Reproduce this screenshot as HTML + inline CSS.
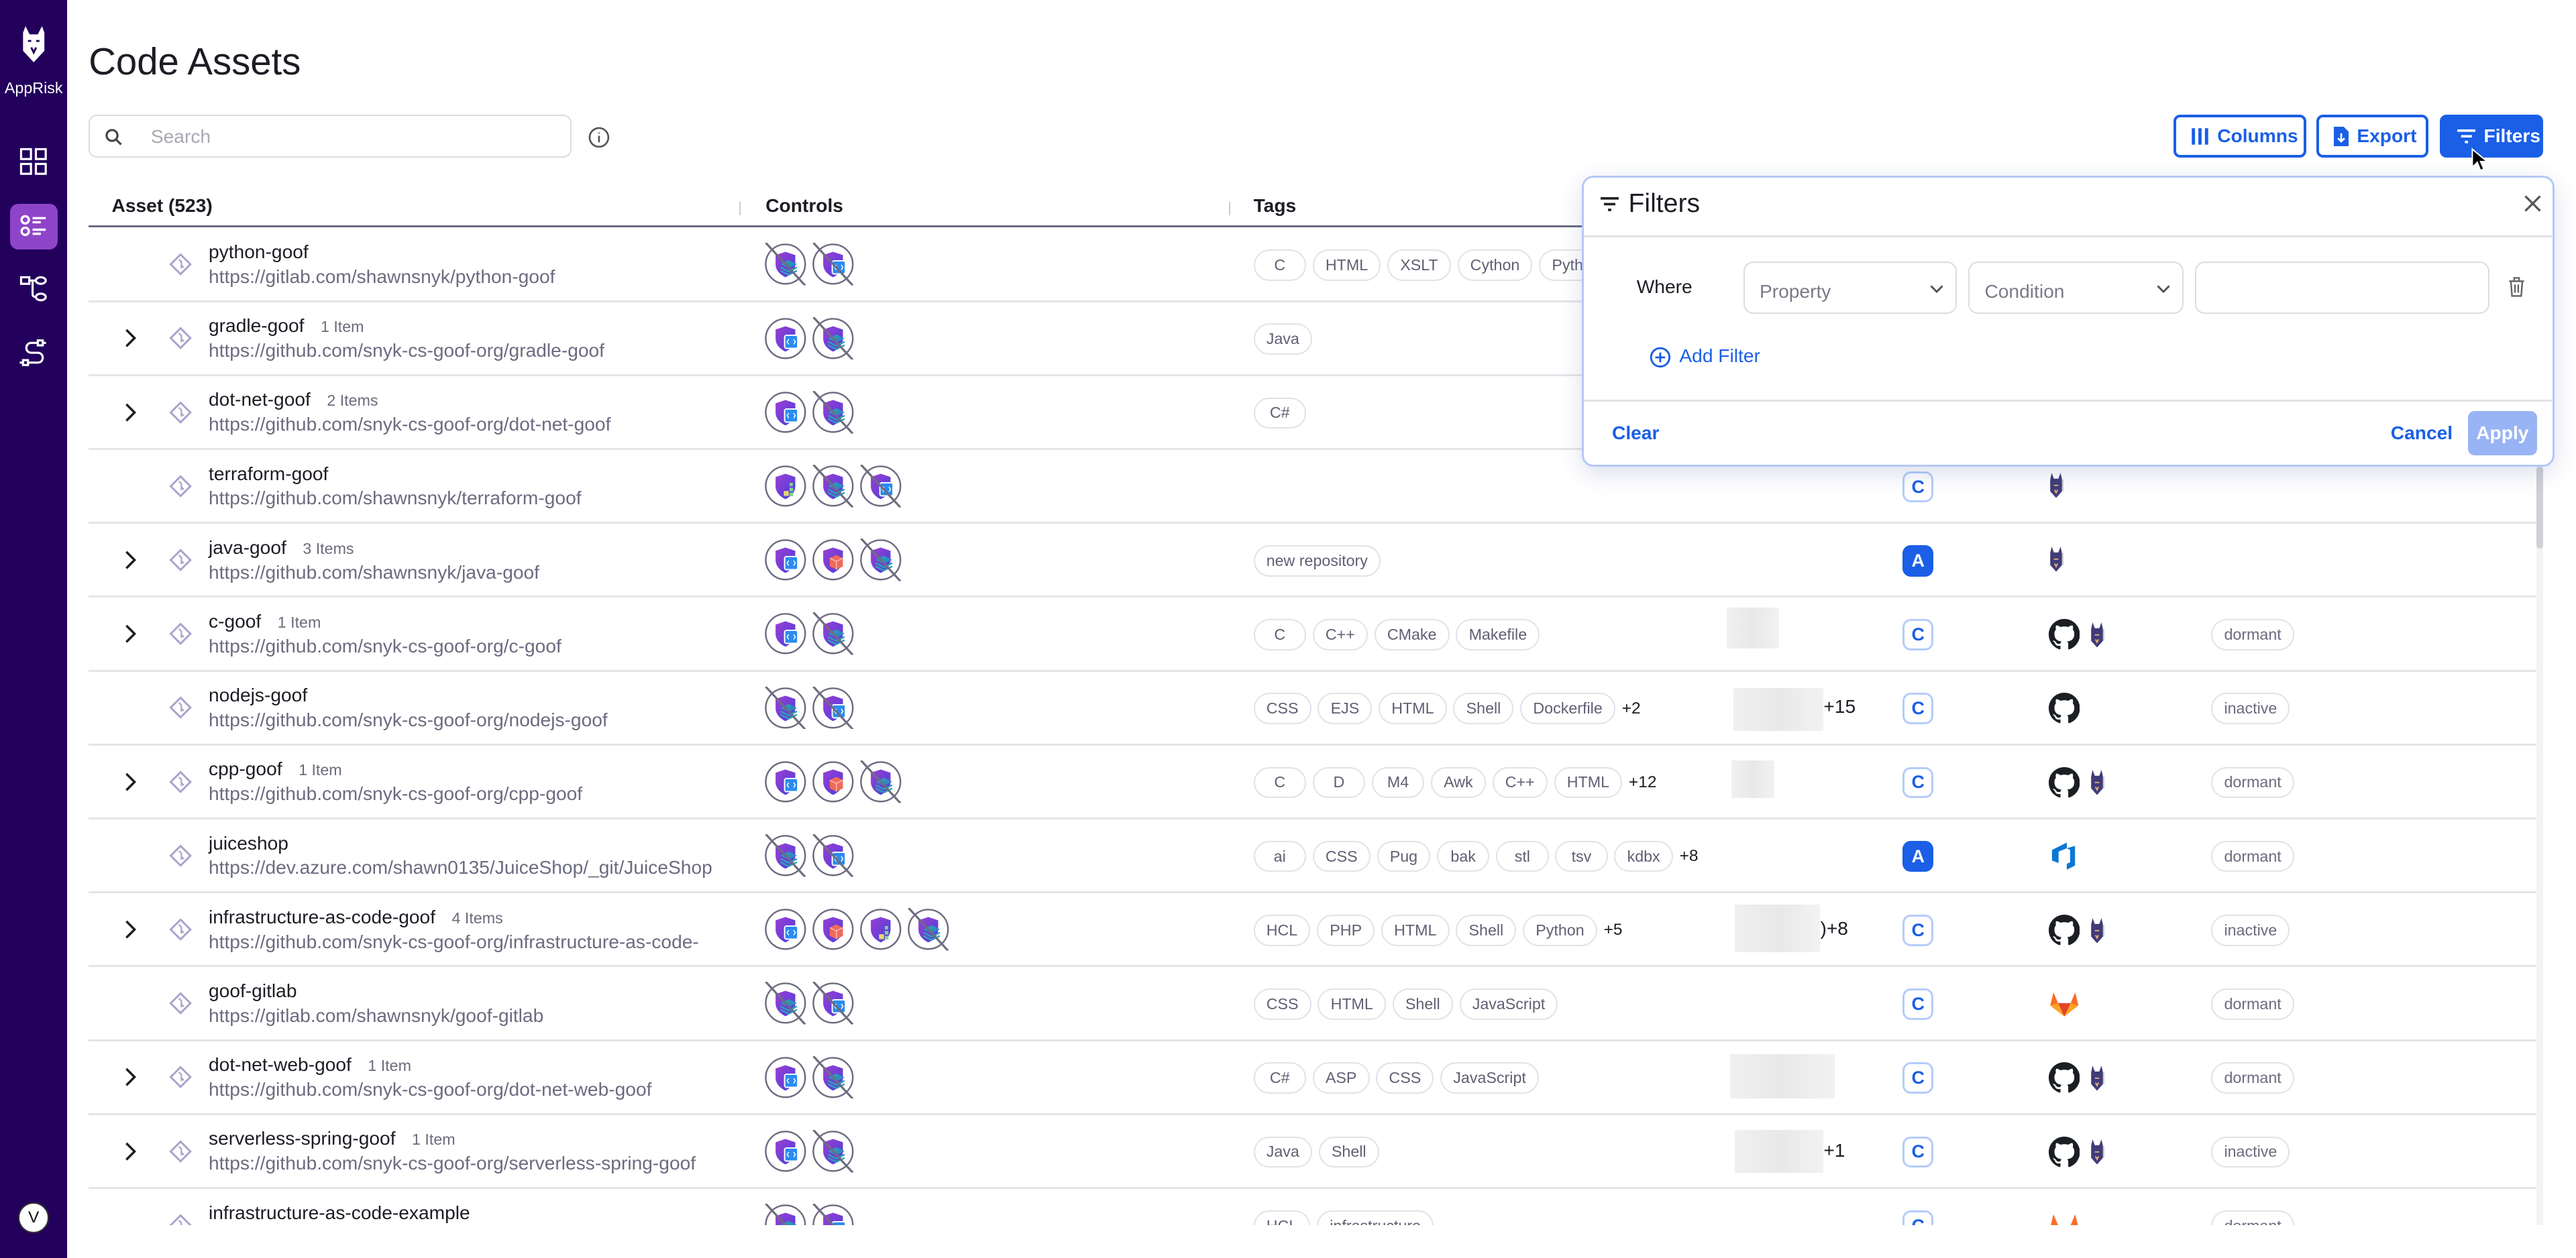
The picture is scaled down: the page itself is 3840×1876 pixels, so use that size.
<!DOCTYPE html>
<html><head><meta charset="utf-8">
<style>
*{box-sizing:border-box;margin:0;padding:0}
html,body{width:3840px;height:1876px;overflow:hidden;background:#fff}
#root{zoom:2.44898;width:1568px;height:766px;position:relative;font-family:"Liberation Sans",Arial,sans-serif;color:#1c1c24;overflow:hidden}
.side{position:absolute;left:0;top:0;width:41px;height:766px;background:#22005c}
.abs{position:absolute}
h1{position:absolute;left:54px;top:24px;font-size:23px;font-weight:400;color:#1c1c24}
.search{position:absolute;left:54px;top:70px;width:294px;height:26px;border:1px solid #dcdce2;border-radius:5px}
.search span{position:absolute;left:37px;top:6px;font-size:11.5px;color:#a8a8b4}
.btn{position:absolute;top:70px;height:26px;border:2px solid #1a5fe6;border-radius:4px;color:#1a5fe6;font-size:11.5px;font-weight:700;display:flex;align-items:center;gap:5px;padding-left:9px}
.th{position:absolute;top:119px;font-size:11.5px;font-weight:700;color:#1c1c24}
.hline{position:absolute;left:54px;top:137px;width:1490px;height:1.5px;background:#6b6b80}
.row{position:absolute;left:54px;width:1490px;height:45px;border-bottom:1.5px solid #e4e4ea}
.chev{position:absolute;left:20px;top:15px}
.dia{position:absolute;left:49px;top:15px}
.nm{position:absolute;left:73px;top:8px;font-size:11.5px;color:#1c1c24;white-space:nowrap}
.nm i{font-style:normal;font-size:9.5px;color:#6b6b7c;margin-left:10px}
.url{position:absolute;left:73px;top:23px;font-size:11.5px;color:#6b6b80;white-space:nowrap}
.ctl{position:absolute;left:411px;top:9px;display:flex;gap:3px}
.tags{position:absolute;left:709px;top:13px;display:flex;gap:4px;align-items:center}
.tg{height:19px;min-width:32px;padding:0 7px;border:1px solid #e2e2e8;border-radius:10px;font-size:9.5px;color:#5f5f73;display:flex;align-items:center;justify-content:center}
.more{font-size:10px;color:#1c1c24}
.blur{position:absolute;top:8px;height:29px;background:linear-gradient(90deg,#f1f0f0,#e9e8e8,#f3f2f2)}
.plus{position:absolute;top:15px;font-size:11.5px;color:#1c1c24}
.bd{position:absolute;left:1104px;top:13px;width:19px;height:19px;border:1.5px solid #b5ccfb;border-radius:5px;color:#1a5fe6;font-size:11px;font-weight:700;display:flex;align-items:center;justify-content:center}
.bd.a{background:#1a5fe6;border-color:#1a5fe6;color:#fff}
.src{position:absolute;left:1193px;top:13px;display:flex;gap:6px;align-items:center}
.st{position:absolute;left:1292px;top:13px;height:19px;padding:0 7px;border:1px solid #e2e2e8;border-radius:10px;font-size:9.5px;color:#6b6b80;display:flex;align-items:center}
.panel{position:absolute;left:963px;top:107px;width:592px;height:177px;background:#fff;border:1.5px solid #b4c8f6;border-radius:7px;box-shadow:0 4px 14px rgba(60,80,160,.18)}
.inp{position:absolute;top:51px;height:32px;border:1px solid #dcdce2;border-radius:6px;font-size:11.5px;color:#7a7a88;padding:11px 0 0 9px}
</style></head><body><div id="root">
<svg width="0" height="0" style="position:absolute">
<defs>
<linearGradient id="sh" x1="0" y1="0" x2="1" y2="1"><stop offset="0" stop-color="#9b3fd0"/><stop offset="1" stop-color="#4a3ee0"/></linearGradient>
<linearGradient id="stk" x1="0" y1="0" x2="1" y2="1"><stop offset="0" stop-color="#1eb2a0"/><stop offset="1" stop-color="#3a6fd8"/></linearGradient>
<symbol id="base" viewBox="0 0 26 26"><circle cx="13" cy="13" r="12" fill="#fff" stroke="#6e6c80" stroke-width="1"/><path d="M7 7.5 L13 5.5 L19 7.5 V13 C19 17 16 19.5 13 21 C10 19.5 7 17 7 13Z" fill="url(#sh)"/></symbol>
<symbol id="code" viewBox="0 0 26 26"><use href="#base"/><rect x="12.5" y="11" width="8" height="8" rx="1.2" fill="#2a8cf0" stroke="#fff" stroke-width=".8"/><path d="M15 13.5l-1 1.5 1 1.5M18 13.5l1 1.5-1 1.5" stroke="#fff" stroke-width=".6" fill="none"/></symbol>
<symbol id="stack" viewBox="0 0 26 26"><use href="#base"/><path d="M10 13l5-2.5 5 2.5-5 2.5z" fill="url(#stk)"/><path d="M10 15l5 2.5 5-2.5M10 17l5 2.5 5-2.5" stroke="#2aa3b0" stroke-width="1" fill="none"/></symbol>
<symbol id="box" viewBox="0 0 26 26"><use href="#base"/><path d="M11 12l4-2 4 2v5l-4 2-4-2z" fill="#f06a5a"/><path d="M11 12l4 2 4-2M15 14v5" stroke="#fbb" stroke-width=".6" fill="none"/></symbol>
<symbol id="iac" viewBox="0 0 26 26"><use href="#base"/><rect x="12" y="16" width="3" height="3" fill="#e8d870"/><rect x="15.5" y="14" width="2.2" height="2.2" fill="#7dd49a"/><rect x="15.5" y="17" width="2.2" height="2.2" fill="#7dd49a"/><rect x="15.5" y="11" width="2" height="2" fill="#7dd49a"/></symbol>
<symbol id="x" viewBox="0 0 26 26"><line x1="1" y1="0" x2="25" y2="26" stroke="#6e6c80" stroke-width="1.3"/></symbol>
<symbol id="dia" viewBox="0 0 14 14"><path d="M7 1L13 7 7 13 1 7Z" fill="none" stroke="#a7a3cc" stroke-width="1.2"/><path d="M6 4l1.5 1.5v4M7.5 7.5l1.5 1.5" stroke="#a7a3cc" stroke-width=".9" fill="none"/></symbol>
<symbol id="chev" viewBox="0 0 10 14"><path d="M3 2l5 5-5 5" fill="none" stroke="#1c1c24" stroke-width="1.4"/></symbol>
<symbol id="gh" viewBox="0 0 16 16"><path fill="#1b1f24" d="M8 0C3.58 0 0 3.58 0 8c0 3.54 2.29 6.53 5.47 7.59.4.07.55-.17.55-.38 0-.19-.01-.82-.01-1.49-2.01.37-2.53-.49-2.69-.94-.09-.23-.48-.94-.82-1.13-.28-.15-.68-.52-.01-.53.63-.01 1.08.58 1.23.82.72 1.21 1.87.87 2.33.66.07-.52.28-.87.51-1.07-1.78-.2-3.640-.89-3.64-3.95 0-.87.31-1.59.82-2.15-.08-.2-.36-1.02.08-2.12 0 0 .67-.21 2.2.82.64-.18 1.32-.27 2-.27.68 0 1.36.09 2 .27 1.53-1.04 2.2-.82 2.2-.82.44 1.1.16 1.92.08 2.12.51.56.82 1.27.82 2.15 0 3.07-1.87 3.75-3.65 3.95.29.25.54.73.54 1.48 0 1.07-.01 1.93-.01 2.2 0 .21.15.46.55.38A8.013 8.013 0 0016 8c0-4.42-3.58-8-8-8z"/></symbol>
<symbol id="snyk" viewBox="0 0 10 18"><path d="M1 5L2 0.5 3.5 4.5H6.5L8 0.5 9 5V13L5 17.5 1 13Z" fill="#3f3c78"/><path d="M3.5 9h3M4 12l1 2 1-2" stroke="#e0b080" stroke-width=".9" fill="none"/><rect x="9" y="5" width="1" height="8" fill="#ccc"/></symbol>
<symbol id="gl" viewBox="0 0 20 18"><path d="M10 17.5L1 10.5 3 2l3 7h8l3-7 2 8.5z" fill="#fc6d26"/><path d="M10 17.5L6 9h8z" fill="#e24329"/><path d="M1 10.5L6 9 10 17.5z" fill="#fca326"/><path d="M19 10.5L14 9 10 17.5z" fill="#fca326"/></symbol>
<symbol id="az" viewBox="0 0 18 18"><path d="M2 5.5L11 1v3.5L6 6.5v7L2 12zM11 4.5L16 3v12l-5 2.5v-3.5l2-1V5.5z" fill="#0a78d4"/></symbol>
</defs></svg>

<div class="side">
  <svg class="abs" style="left:11px;top:16px" width="19" height="28" viewBox="0 0 19 28"><path d="M3 4L4.5 0 7 5h5l2.5-5L16 4v11l-6.5 7L3 15z" fill="#fff"/><path d="M6 9h2M11 9h2M8 13l1.5 3 1.5-3" stroke="#22005c" stroke-width="1.2" fill="none"/></svg>
  <div class="abs" style="left:0;width:41px;top:48px;text-align:center;color:#fff;font-size:9.5px">AppRisk</div>
  <svg class="abs" style="left:12px;top:90px" width="17" height="17" viewBox="0 0 17 17" fill="none" stroke="#fff" stroke-width="1.3"><rect x="1" y="1" width="6" height="6"/><rect x="10" y="1" width="6" height="6"/><rect x="1" y="10" width="6" height="6"/><rect x="10" y="10" width="6" height="6"/></svg>
  <div class="abs" style="left:6px;top:124px;width:29px;height:28px;background:#8e44c8;border-radius:5px"></div>
  <svg class="abs" style="left:12px;top:130px" width="18" height="16" viewBox="0 0 18 16" fill="none" stroke="#fff" stroke-width="1.4"><circle cx="3.5" cy="4" r="2.2"/><circle cx="3.5" cy="11" r="2.2"/><path d="M8 3h8M8 5.5h5M8 10h8M8 12.5h5"/></svg>
  <svg class="abs" style="left:12px;top:168px" width="17" height="17" viewBox="0 0 17 17" fill="none" stroke="#fff" stroke-width="1.3"><rect x="1" y="1" width="5" height="4"/><ellipse cx="13" cy="3" rx="3" ry="2"/><ellipse cx="13" cy="13" rx="3" ry="2"/><path d="M6 3h4M8 3v8c0 2 1 2 2 2"/></svg>
  <svg class="abs" style="left:11px;top:206px" width="19" height="19" viewBox="0 0 19 19" fill="none" stroke="#fff" stroke-width="1.3"><path d="M17 3h-2M12 3H8C4 3 4 9 8 9h4c4 0 4 6 0 6H6M1 15h2"/><rect x="12" y="1.5" width="3" height="3"/><rect x="3" y="13.5" width="3" height="3"/></svg>
  <div class="abs" style="left:11px;top:732px;width:19px;height:19px;border-radius:50%;background:#fff;border:1px solid #333;font-size:10px;text-align:center;line-height:17px;color:#111">V</div>
</div>

<h1>Code Assets</h1>
<div class="search"><svg class="abs" style="left:9px;top:7px" width="11" height="11" viewBox="0 0 11 11" fill="none" stroke="#444" stroke-width="1.3"><circle cx="4.5" cy="4.5" r="3.3"/><path d="M7 7l3 3"/></svg><span>Search</span></div>
<svg class="abs" style="left:358px;top:77px" width="13" height="13" viewBox="0 0 13 13" fill="none" stroke="#555" stroke-width="1.1"><circle cx="6.5" cy="6.5" r="5.7"/><path d="M6.5 5.5v4M6.5 3.5v.6"/></svg>

<div class="btn" style="left:1323px;width:81px"><svg width="11" height="11" viewBox="0 0 11 11" fill="#1a5fe6"><rect x="0.5" y="0.5" width="2" height="10"/><rect x="4.5" y="0.5" width="2" height="10"/><rect x="8.5" y="0.5" width="2" height="10"/></svg>Columns</div>
<div class="btn" style="left:1410px;width:68px"><svg width="9" height="12" viewBox="0 0 9 12"><path d="M0 0h6l3 3v9H0z" fill="#1a5fe6"/><path d="M4.5 4v5M2.5 7l2 2 2-2" stroke="#fff" stroke-width="1.1" fill="none"/></svg>Export</div>
<div class="btn" style="left:1485px;width:63px;background:#1a5fe6;color:#fff"><svg width="12" height="10" viewBox="0 0 12 10" fill="#fff"><rect x="0" y="0.5" width="12" height="1.6"/><rect x="2.5" y="4.2" width="7" height="1.6"/><rect x="5" y="7.9" width="2" height="1.6"/></svg>Filters</div>
<svg class="abs" style="left:1504px;top:90px" width="10" height="15" viewBox="0 0 10 15"><path d="M1 1v11l3-3 2 5 2-1-2-4.5h4z" fill="#000" stroke="#fff" stroke-width=".8"/></svg>

<div class="th" style="left:68px">Asset (523)</div>
<div class="abs" style="left:450px;top:123px;width:1px;height:8px;background:#ccc"></div>
<div class="th" style="left:466px">Controls</div>
<div class="abs" style="left:748px;top:123px;width:1px;height:8px;background:#ccc"></div>
<div class="th" style="left:763px">Tags</div>
<div class="hline"></div>

<!-- rows -->
<div class="row" style="top:139px"><svg class="dia" width="14" height="14"><use href="#dia"/></svg><div class="nm">python-goof</div><div class="url">https://gitlab.com/shawnsnyk/python-goof</div>
<div class="ctl"><svg width="26" height="26"><use href="#stack"/><use href="#x"/></svg><svg width="26" height="26"><use href="#code"/><use href="#x"/></svg></div>
<div class="tags"><span class="tg">C</span><span class="tg">HTML</span><span class="tg">XSLT</span><span class="tg">Cython</span><span class="tg">Python</span></div></div>

<div class="row" style="top:184px"><svg class="chev" width="10" height="14"><use href="#chev"/></svg><svg class="dia" width="14" height="14"><use href="#dia"/></svg><div class="nm">gradle-goof<i>1 Item</i></div><div class="url">https://github.com/snyk-cs-goof-org/gradle-goof</div>
<div class="ctl"><svg width="26" height="26"><use href="#code"/></svg><svg width="26" height="26"><use href="#stack"/><use href="#x"/></svg></div>
<div class="tags"><span class="tg">Java</span></div></div>

<div class="row" style="top:229px"><svg class="chev" width="10" height="14"><use href="#chev"/></svg><svg class="dia" width="14" height="14"><use href="#dia"/></svg><div class="nm">dot-net-goof<i>2 Items</i></div><div class="url">https://github.com/snyk-cs-goof-org/dot-net-goof</div>
<div class="ctl"><svg width="26" height="26"><use href="#code"/></svg><svg width="26" height="26"><use href="#stack"/><use href="#x"/></svg></div>
<div class="tags"><span class="tg">C#</span></div></div>

<div class="row" style="top:274px"><svg class="dia" width="14" height="14"><use href="#dia"/></svg><div class="nm">terraform-goof</div><div class="url">https://github.com/shawnsnyk/terraform-goof</div>
<div class="ctl"><svg width="26" height="26"><use href="#iac"/></svg><svg width="26" height="26"><use href="#stack"/><use href="#x"/></svg><svg width="26" height="26"><use href="#code"/><use href="#x"/></svg></div>
<div class="bd">C</div><div class="src"><svg width="9" height="17"><use href="#snyk"/></svg></div></div>

<div class="row" style="top:319px"><svg class="chev" width="10" height="14"><use href="#chev"/></svg><svg class="dia" width="14" height="14"><use href="#dia"/></svg><div class="nm">java-goof<i>3 Items</i></div><div class="url">https://github.com/shawnsnyk/java-goof</div>
<div class="ctl"><svg width="26" height="26"><use href="#code"/></svg><svg width="26" height="26"><use href="#box"/></svg><svg width="26" height="26"><use href="#stack"/><use href="#x"/></svg></div>
<div class="tags"><span class="tg">new repository</span></div>
<div class="bd a">A</div><div class="src"><svg width="9" height="17"><use href="#snyk"/></svg></div></div>

<div class="row" style="top:364px"><svg class="chev" width="10" height="14"><use href="#chev"/></svg><svg class="dia" width="14" height="14"><use href="#dia"/></svg><div class="nm">c-goof<i>1 Item</i></div><div class="url">https://github.com/snyk-cs-goof-org/c-goof</div>
<div class="ctl"><svg width="26" height="26"><use href="#code"/></svg><svg width="26" height="26"><use href="#stack"/><use href="#x"/></svg></div>
<div class="tags"><span class="tg">C</span><span class="tg">C++</span><span class="tg">CMake</span><span class="tg">Makefile</span></div>
<div class="blur" style="left:997px;width:32px;top:6px;height:25px"></div>
<div class="bd">C</div><div class="src"><svg width="19" height="19"><use href="#gh"/></svg><svg width="9" height="17"><use href="#snyk"/></svg></div><div class="st">dormant</div></div>

<div class="row" style="top:409px"><svg class="dia" width="14" height="14"><use href="#dia"/></svg><div class="nm">nodejs-goof</div><div class="url">https://github.com/snyk-cs-goof-org/nodejs-goof</div>
<div class="ctl"><svg width="26" height="26"><use href="#stack"/><use href="#x"/></svg><svg width="26" height="26"><use href="#code"/><use href="#x"/></svg></div>
<div class="tags"><span class="tg">CSS</span><span class="tg">EJS</span><span class="tg">HTML</span><span class="tg">Shell</span><span class="tg">Dockerfile</span><span class="more">+2</span></div>
<div class="blur" style="left:1001px;width:55px;top:10px;height:26px"></div><div class="plus" style="left:1056px">+15</div>
<div class="bd">C</div><div class="src"><svg width="19" height="19"><use href="#gh"/></svg></div><div class="st">inactive</div></div>

<div class="row" style="top:454px"><svg class="chev" width="10" height="14"><use href="#chev"/></svg><svg class="dia" width="14" height="14"><use href="#dia"/></svg><div class="nm">cpp-goof<i>1 Item</i></div><div class="url">https://github.com/snyk-cs-goof-org/cpp-goof</div>
<div class="ctl"><svg width="26" height="26"><use href="#code"/></svg><svg width="26" height="26"><use href="#box"/></svg><svg width="26" height="26"><use href="#stack"/><use href="#x"/></svg></div>
<div class="tags"><span class="tg">C</span><span class="tg">D</span><span class="tg">M4</span><span class="tg">Awk</span><span class="tg">C++</span><span class="tg">HTML</span><span class="more">+12</span></div>
<div class="blur" style="left:1000px;width:26px;top:9px;height:23px"></div>
<div class="bd">C</div><div class="src"><svg width="19" height="19"><use href="#gh"/></svg><svg width="9" height="17"><use href="#snyk"/></svg></div><div class="st">dormant</div></div>

<div class="row" style="top:499px"><svg class="dia" width="14" height="14"><use href="#dia"/></svg><div class="nm">juiceshop</div><div class="url">https://dev.azure.com/shawn0135/JuiceShop/_git/JuiceShop</div>
<div class="ctl"><svg width="26" height="26"><use href="#stack"/><use href="#x"/></svg><svg width="26" height="26"><use href="#code"/><use href="#x"/></svg></div>
<div class="tags"><span class="tg">ai</span><span class="tg">CSS</span><span class="tg">Pug</span><span class="tg">bak</span><span class="tg">stl</span><span class="tg">tsv</span><span class="tg">kdbx</span><span class="more">+8</span></div>
<div class="bd a">A</div><div class="src"><svg width="18" height="18"><use href="#az"/></svg></div><div class="st">dormant</div></div>

<div class="row" style="top:544px"><svg class="chev" width="10" height="14"><use href="#chev"/></svg><svg class="dia" width="14" height="14"><use href="#dia"/></svg><div class="nm">infrastructure-as-code-goof<i>4 Items</i></div><div class="url">https://github.com/snyk-cs-goof-org/infrastructure-as-code-</div>
<div class="ctl"><svg width="26" height="26"><use href="#code"/></svg><svg width="26" height="26"><use href="#box"/></svg><svg width="26" height="26"><use href="#iac"/></svg><svg width="26" height="26"><use href="#stack"/><use href="#x"/></svg></div>
<div class="tags"><span class="tg">HCL</span><span class="tg">PHP</span><span class="tg">HTML</span><span class="tg">Shell</span><span class="tg">Python</span><span class="more">+5</span></div>
<div class="blur" style="left:1002px;width:52px;top:7px;height:29px"></div><div class="plus" style="left:1054px">)+8</div>
<div class="bd">C</div><div class="src"><svg width="19" height="19"><use href="#gh"/></svg><svg width="9" height="17"><use href="#snyk"/></svg></div><div class="st">inactive</div></div>

<div class="row" style="top:589px"><svg class="dia" width="14" height="14"><use href="#dia"/></svg><div class="nm">goof-gitlab</div><div class="url">https://gitlab.com/shawnsnyk/goof-gitlab</div>
<div class="ctl"><svg width="26" height="26"><use href="#stack"/><use href="#x"/></svg><svg width="26" height="26"><use href="#code"/><use href="#x"/></svg></div>
<div class="tags"><span class="tg">CSS</span><span class="tg">HTML</span><span class="tg">Shell</span><span class="tg">JavaScript</span></div>
<div class="bd">C</div><div class="src"><svg width="19" height="18"><use href="#gl"/></svg></div><div class="st">dormant</div></div>

<div class="row" style="top:634px"><svg class="chev" width="10" height="14"><use href="#chev"/></svg><svg class="dia" width="14" height="14"><use href="#dia"/></svg><div class="nm">dot-net-web-goof<i>1 Item</i></div><div class="url">https://github.com/snyk-cs-goof-org/dot-net-web-goof</div>
<div class="ctl"><svg width="26" height="26"><use href="#code"/></svg><svg width="26" height="26"><use href="#stack"/><use href="#x"/></svg></div>
<div class="tags"><span class="tg">C#</span><span class="tg">ASP</span><span class="tg">CSS</span><span class="tg">JavaScript</span></div>
<div class="blur" style="left:999px;width:64px;top:8px;height:27px"></div>
<div class="bd">C</div><div class="src"><svg width="19" height="19"><use href="#gh"/></svg><svg width="9" height="17"><use href="#snyk"/></svg></div><div class="st">dormant</div></div>

<div class="row" style="top:679px"><svg class="chev" width="10" height="14"><use href="#chev"/></svg><svg class="dia" width="14" height="14"><use href="#dia"/></svg><div class="nm">serverless-spring-goof<i>1 Item</i></div><div class="url">https://github.com/snyk-cs-goof-org/serverless-spring-goof</div>
<div class="ctl"><svg width="26" height="26"><use href="#code"/></svg><svg width="26" height="26"><use href="#stack"/><use href="#x"/></svg></div>
<div class="tags"><span class="tg">Java</span><span class="tg">Shell</span></div>
<div class="blur" style="left:1002px;width:54px;top:9px;height:26px"></div><div class="plus" style="left:1056px">+1</div>
<div class="bd">C</div><div class="src"><svg width="19" height="19"><use href="#gh"/></svg><svg width="9" height="17"><use href="#snyk"/></svg></div><div class="st">inactive</div></div>

<div class="row" style="top:724px;border:none"><svg class="dia" width="14" height="14"><use href="#dia"/></svg><div class="nm">infrastructure-as-code-example</div>
<div class="ctl"><svg width="26" height="26"><use href="#stack"/><use href="#x"/></svg><svg width="26" height="26"><use href="#code"/><use href="#x"/></svg></div>
<div class="tags"><span class="tg">HCL</span><span class="tg">infrastructure</span></div>
<div class="bd">C</div><div class="src"><svg width="19" height="18"><use href="#gl"/></svg></div><div class="st">dormant</div></div>

<div class="abs" style="left:41px;top:746px;width:1527px;height:20px;background:#fff"></div>
<div class="abs" style="left:1544px;top:108px;width:4px;height:638px;background:#f4f4f6"></div>
<div class="abs" style="left:1544px;top:284px;width:4px;height:50px;background:#d0d0d6;border-radius:2px"></div>

<!-- filter panel -->
<div class="panel">
  <svg class="abs" style="left:10px;top:12px" width="11" height="9" viewBox="0 0 11 9" fill="#222"><rect y="0" width="11" height="1.5"/><rect x="2" y="3.5" width="7" height="1.5"/><rect x="4.5" y="7" width="2" height="1.5"/></svg>
  <div class="abs" style="left:27px;top:7px;font-size:16px;color:#1c1c24">Filters</div>
  <svg class="abs" style="left:572px;top:10px" width="11" height="11" viewBox="0 0 11 11" stroke="#555" stroke-width="1.3"><path d="M1 1l9 9M10 1L1 10"/></svg>
  <div class="abs" style="left:0;top:35px;width:589px;height:1.5px;background:#e2e2e8"></div>
  <div class="abs" style="left:32px;top:60px;font-size:11.5px;color:#1c1c24">Where</div>
  <div class="inp" style="left:97px;width:130px">Property<svg class="abs" style="right:7px;top:13px" width="9" height="6" viewBox="0 0 9 6" fill="none" stroke="#555" stroke-width="1.2"><path d="M1 1l3.5 3.5L8 1"/></svg></div>
  <div class="inp" style="left:234px;width:131px">Condition<svg class="abs" style="right:7px;top:13px" width="9" height="6" viewBox="0 0 9 6" fill="none" stroke="#555" stroke-width="1.2"><path d="M1 1l3.5 3.5L8 1"/></svg></div>
  <div class="inp" style="left:372px;width:179px"></div>
  <svg class="abs" style="left:562px;top:60px" width="11" height="13" viewBox="0 0 11 13" fill="none" stroke="#666" stroke-width="1"><path d="M1 3h9M4 3V1h3v2M2 3l.7 9h5.6L9 3M4.5 5v5M6.5 5v5"/></svg>
  <svg class="abs" style="left:40px;top:103px" width="13" height="13" viewBox="0 0 13 13" fill="none" stroke="#1a5fe6" stroke-width="1.2"><circle cx="6.5" cy="6.5" r="5.6"/><path d="M6.5 3.5v6M3.5 6.5h6"/></svg>
  <div class="abs" style="left:58px;top:102px;font-size:11.5px;color:#1a5fe6">Add Filter</div>
  <div class="abs" style="left:0;top:135px;width:589px;height:1.5px;background:#e2e2e8"></div>
  <div class="abs" style="left:17px;top:149px;font-size:11.5px;color:#1a5fe6;font-weight:700">Clear</div>
  <div class="abs" style="left:491px;top:149px;font-size:11.5px;color:#1a5fe6;font-weight:700">Cancel</div>
  <div class="abs" style="left:538px;top:142px;width:42px;height:27px;background:#98b4f4;border-radius:4px;color:#fff;font-size:11.5px;font-weight:700;text-align:center;line-height:27px">Apply</div>
</div>
</div></body></html>
